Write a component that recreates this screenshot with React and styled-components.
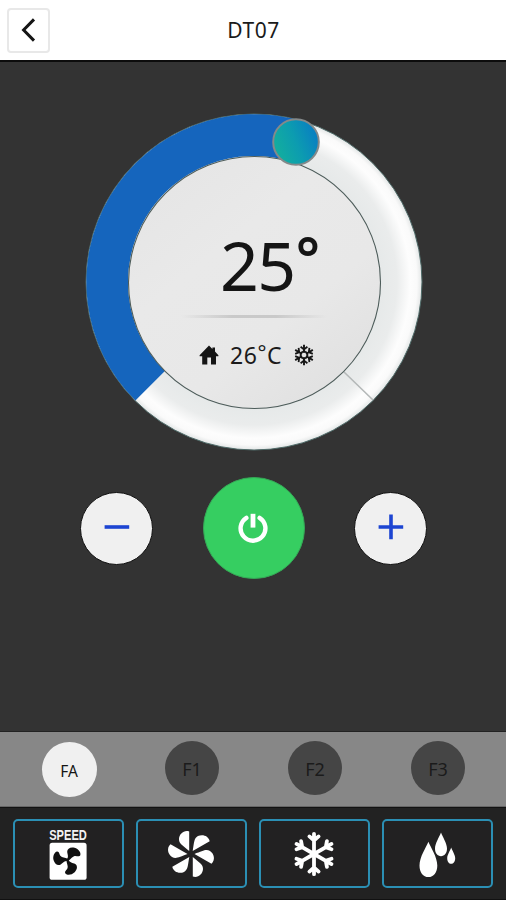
import React from 'react';
import styled, { createGlobalStyle } from 'styled-components';

const GlobalStyle = createGlobalStyle`
  * {
    box-sizing: border-box;
  }

  body {
    margin: 0;
    background: #333333;
    font-family: "Noto Sans", "Open Sans", sans-serif;
  }

  button {
    padding: 0;
    font-family: inherit;
  }
`;

const FAN_SPEEDS = ['FA', 'F1', 'F2', 'F3'];
const SIXTHS = [0, 60, 120, 180, 240, 300];

const HouseIcon = () => (
  <svg width="20" height="20" viewBox="0 0 20 20" fill="#151515">
    <path d="M10 0.4L13.4 3.9V2.6H16V6.6L19.4 10.2V11.2H17V19.4H12V12.4H8.3V19.4H3.2V11.2H0.6V10.2Z" />
  </svg>
);

const SmallSnowIcon = () => (
  <svg width="22" height="22" viewBox="-11 -11 22 22" fill="none" stroke="#151515">
    {SIXTHS.map(angle => (
      <g key={angle} transform={`rotate(${angle})`}>
        <path d="M0 -2.6V-10.2" strokeWidth="1.9" />
        <path d="M-3.4 -8.2L0 -5.6L3.4 -8.2" strokeWidth="1.8" />
        <path d="M-1.9 -3.2H1.9" strokeWidth="1.8" />
      </g>
    ))}
  </svg>
);

const PowerIcon = () => (
  <svg width="32" height="32" viewBox="-16 -16 32 32" fill="none" stroke="#fff" strokeWidth="4.4">
    <path d="M-6.6 -10.2A12.4 12.4 0 1 0 6.6 -10.2" strokeLinecap="round" />
    <path d="M0 -14.2V-0.4" strokeWidth="4.8" />
  </svg>
);

const SpeedIcon = () => (
  <svg width="64" height="62" viewBox="-11 -5 64 62">
    <text
      x="2.2"
      y="12.2"
      textLength="37.6"
      lengthAdjust="spacingAndGlyphs"
      fontFamily="Liberation Sans, Arial, sans-serif"
      fontSize="14"
      fontWeight="700"
      fill="#f4f4f4"
    >
      SPEED
    </text>
    <rect x="2.6" y="14.8" width="37" height="37" rx="2.6" fill="#fff" />
    <g transform="translate(20.6 32)" fill="#111">
      {[0, 120, 240].map(angle => (
        <path
          key={angle}
          transform={`rotate(${angle})`}
          d="M-1 -0.6C1.6 -3 -0.4 -6 -0.4 -8.2C-0.4 -11.6 3 -13.2 7 -12.2C11 -11 13.6 -7.4 12.7 -4.8C11.7 -2.8 9 -4.4 7 -4C5 -3.6 3.4 -1 1 0.8Z"
        />
      ))}
    </g>
  </svg>
);

const FanIcon = () => (
  <svg width="50" height="50" viewBox="-25 -25 50 50" fill="#fff">
    {SIXTHS.map(angle => (
      <path
        key={angle}
        transform={`rotate(${angle})`}
        d="M-1.8 -3V-22.6C-7 -24.4 -11.8 -20 -12 -15C-12.2 -10.4 -8.6 -8.8 -1.8 -3Z"
      />
    ))}
  </svg>
);

const SnowIcon = () => (
  <svg width="50" height="50" viewBox="-25 -25 50 50" fill="none" stroke="#fff" strokeWidth="3.8" strokeLinecap="round">
    {SIXTHS.map(angle => (
      <path key={angle} transform={`rotate(${angle})`} d="M0 0V-20.2M-4.6 -17.6L0 -13.6L4.6 -17.6" />
    ))}
  </svg>
);

const DropsIcon = () => (
  <svg width="50" height="50" viewBox="0 0 50 50" fill="#fff">
    <path d="M16.4 12.8C18.6 18.2 25.3 28 25.3 36.4C25.3 43.4 21.6 48 16.4 48S7.5 43.4 7.5 36.4C7.5 28 14.2 18.2 16.4 12.8Z" />
    <path d="M29 3.6C30.5 7.6 35 14.6 35 19.6C35 24.2 32.4 27.2 29 27.2S23 24.2 23 19.6C23 14.6 27.5 7.6 29 3.6Z" />
    <path d="M39.2 18.6C40.2 21.6 43.2 26 43.2 29.2C43.2 32.4 41.4 34.8 39.2 34.8S35.2 32.4 35.2 29.2C35.2 26 38.2 21.6 39.2 18.6Z" />
  </svg>
);

const MODES = [
  { name: 'speed', Icon: SpeedIcon },
  { name: 'fan', Icon: FanIcon },
  { name: 'cool', Icon: SnowIcon },
  { name: 'dry', Icon: DropsIcon },
];

const DialArt = () => (
  <DialSvg viewBox="-169 -169 338 338">
    <defs>
      <radialGradient id="track" gradientUnits="userSpaceOnUse" cx="0" cy="0" r="168">
        <stop offset="0.75" stopColor="#e6e9e9" />
        <stop offset="0.85" stopColor="#eaecec" />
        <stop offset="0.93" stopColor="#fdfdfd" />
        <stop offset="0.97" stopColor="#fafafa" />
        <stop offset="1" stopColor="#e3e6e6" />
      </radialGradient>
      <linearGradient id="face" x1="0" y1="0" x2="0.8" y2="1">
        <stop offset="0" stopColor="#e4e4e4" />
        <stop offset="0.4" stopColor="#e9e9e9" />
        <stop offset="0.7" stopColor="#e8e8e8" />
        <stop offset="1" stopColor="#e0e0e0" />
      </linearGradient>
      <linearGradient id="knob" x1="0" y1="0.7" x2="1" y2="0.3">
        <stop offset="0.1" stopColor="#12aca0" />
        <stop offset="0.5" stopColor="#0c9cb0" />
        <stop offset="1" stopColor="#087cc4" />
      </linearGradient>
    </defs>
    <circle r="168" fill="url(#track)" stroke="#4f6b69" strokeWidth="1" />
    <path d="M-118.6 118.6A167.8 167.8 0 0 1 48 -160.8L36.5 -120.6A126 126 0 0 0 -89.1 89.1Z" fill="#1565bd" />
    <path d="M90 90L119 118" stroke="#b4b8b8" strokeWidth="1.6" />
    <circle cx="0.5" cy="0.5" r="126" fill="url(#face)" stroke="#4d5c5a" strokeWidth="1.1" />
    <circle cx="42" cy="-140" r="22.8" fill="url(#knob)" stroke="#84898a" strokeWidth="2" />
  </DialSvg>
);

const App = () => {
  return (
    <React.Fragment>
      <GlobalStyle />
      <Screen>
        <Header>
          <BackButton aria-label="Back">
            <svg width="20" height="28" viewBox="0 0 20 28" fill="none" stroke="#151515" strokeWidth="3">
              <path d="M15 3.4L4.6 14L15 24.6" />
            </svg>
          </BackButton>
          <Title>DT07</Title>
        </Header>
        <Main>
          <Dial>
            <DialArt />
            <Readout>
              <Target>
                25<Degree>°</Degree>
              </Target>
              <Divider />
              <Room>
                <HouseIcon />
                <RoomTemp>26<SmallDegree>°</SmallDegree>C</RoomTemp>
                <SmallSnowIcon />
              </Room>
            </Readout>
          </Dial>
          <Controls>
            <StepButton aria-label="Lower">
              <svg width="26" height="26" viewBox="0 0 26 26" stroke="#1d45d2" strokeWidth="3.6">
                <path d="M0.6 13H25.2" />
              </svg>
            </StepButton>
            <PowerButton aria-label="Power">
              <PowerIcon />
            </PowerButton>
            <StepButton aria-label="Raise">
              <svg width="26" height="26" viewBox="0 0 26 26" stroke="#1d45d2" strokeWidth="3.6">
                <path d="M0.6 13H25.2M13 0.6V25.2" />
              </svg>
            </StepButton>
          </Controls>
        </Main>
        <SpeedBar>
          {FAN_SPEEDS.map((speed, i) => (
            <SpeedButton key={speed} $active={i === 0}>{speed}</SpeedButton>
          ))}
        </SpeedBar>
        <ModeBar>
          {MODES.map(({ name, Icon }) => (
            <ModeButton key={name} aria-label={name}>
              <Icon />
            </ModeButton>
          ))}
        </ModeBar>
      </Screen>
    </React.Fragment>
  );
};

export default App;

const Screen = styled.div`
  width: 506px;
  height: 900px;
  display: flex;
  flex-direction: column;
  overflow: hidden;
  background: #333333;
`;

const Header = styled.header`
  height: 62px;
  flex: none;
  display: grid;
  grid-template-columns: 50px 1fr 50px;
  align-items: center;
  background: #ffffff;
  border-bottom: 2px solid #0c0c0c;
`;

const BackButton = styled.button`
  width: 43px;
  height: 45px;
  margin-left: 7px;
  display: flex;
  align-items: center;
  justify-content: center;
  background: #ffffff;
  border: 2px solid #e8e8e8;
  border-radius: 4px;
`;

const Title = styled.h1`
  margin: 0;
  padding: 0 0 0 1px;
  text-align: center;
  font-size: 21px;
  line-height: 28px;
  font-weight: 400;
  letter-spacing: 0.5px;
  color: #1b1b1b;
`;

const Main = styled.main`
  flex: 1;
  display: flex;
  flex-direction: column;
  align-items: center;
  padding: 51px 0 0 1px;
`;

const Dial = styled.section`
  position: relative;
  width: 338px;
  height: 338px;
  flex: none;
`;

const DialSvg = styled.svg`
  position: absolute;
  inset: 0;
  width: 100%;
  height: 100%;
`;

const Readout = styled.div`
  position: relative;
  display: flex;
  flex-direction: column;
  align-items: center;
  padding-top: 112px;
`;

const Target = styled.div`
  display: flex;
  height: 80px;
  padding-left: 33px;
  font-size: 68px;
  line-height: 80px;
  letter-spacing: -1.5px;
  color: #151515;
`;

const Degree = styled.span`
  font-size: 57px;
  font-weight: 600;
  line-height: 64px;
  letter-spacing: 0;
  margin-left: 1px;
`;

const Divider = styled.div`
  width: 146px;
  height: 3px;
  margin-top: 10px;
  background: linear-gradient(to right, #e8e8e800, #c9c9c9 35%, #c9c9c9 65%, #e8e8e800);
`;

const Room = styled.div`
  display: flex;
  align-items: center;
  height: 30px;
  margin-top: 22px;
  padding-left: 7px;
  gap: 11px;
`;

const RoomTemp = styled.span`
  display: flex;
  font-size: 23px;
  line-height: 30px;
  letter-spacing: 0.5px;
  color: #1b1b1b;
`;

const SmallDegree = styled.span`
  font-size: 21px;
  line-height: 25px;
`;

const Controls = styled.div`
  width: 347px;
  display: flex;
  align-items: center;
  justify-content: space-between;
  margin-top: 26px;
`;

const RoundButton = styled.button`
  display: flex;
  align-items: center;
  justify-content: center;
  border-radius: 50%;
`;

const StepButton = styled(RoundButton)`
  width: 73px;
  height: 73px;
  padding-bottom: 3px;
  background: #f0f0f0;
  border: 1px solid #111111;
`;

const PowerButton = styled(RoundButton)`
  width: 102px;
  height: 102px;
  padding-right: 2px;
  background: #36ce61;
  border: 1px solid #35a756;
`;

const SpeedBar = styled.div`
  height: 76px;
  flex: none;
  display: grid;
  grid-template-columns: repeat(4, 123px);
  justify-items: center;
  padding: 9px 7px 0 7.5px;
  background: #878787;
  border-top: 1px solid #222222;
  border-bottom: 1px solid #666666;
`;

const SpeedButton = styled(RoundButton)`
  width: ${props => (props.$active ? 55 : 54)}px;
  height: ${props => (props.$active ? 55 : 54)}px;
  margin-top: ${props => (props.$active ? 1 : 0)}px;
  padding-top: 2px;
  border: none;
  background: ${props => (props.$active ? '#f0f0f0' : '#454545')};
  color: ${props => (props.$active ? '#151515' : '#1b1b1b')};
  font-size: ${props => (props.$active ? 15.5 : 18)}px;
`;

const ModeBar = styled.nav`
  height: 93px;
  flex: none;
  display: grid;
  grid-template-columns: repeat(4, 111px);
  column-gap: 12px;
  padding: 11px 13px 0 13px;
  background: #222222;
  border-top: 1px solid #121212;
  border-bottom: 1px solid #111111;
`;

const ModeButton = styled.button`
  width: 111px;
  height: 69px;
  padding-right: 1px;
  display: flex;
  align-items: center;
  justify-content: center;
  background: #222122;
  border: 2px solid #2b8fb4;
  border-radius: 5px;
`;
